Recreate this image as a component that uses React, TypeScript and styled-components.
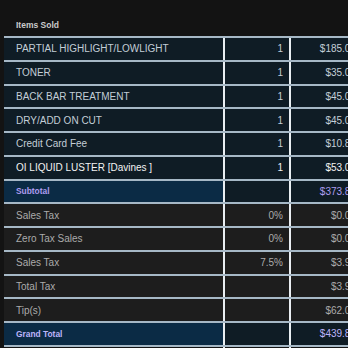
import React from "react";
import styled, { createGlobalStyle } from "styled-components";

const GlobalStyle = createGlobalStyle`
  html, body {
    margin: 0;
    padding: 0;
    background: #131313;
    overflow: hidden;
  }
  body {
    font-family: "Liberation Sans", Arial, sans-serif;
  }
`;

type Tone = "item" | "strong" | "sub" | "tax" | "grand" | "empty";

const Page = styled.div`
  width: 348px;
  height: 348px;
  padding-left: 4px;
  box-sizing: border-box;
  overflow: hidden;
  background: #131313;
`;

const Heading = styled.div`
  height: 36px;
  box-sizing: border-box;
  padding: 20px 0 0 12px;
  font-size: 8.5px;
  font-weight: 700;
  color: #cbcbcb;
`;

const Table = styled.div`
  width: 362px;
  border-top: 2px solid #a6b8c6;
`;

const Row = styled.div<{ $tone: Tone }>`
  display: grid;
  grid-template-columns: 219px 66px 73px;
  height: 21.75px;
  border-bottom: ${(p) => (p.$tone === "empty" ? "none" : "2px solid #a6b8c6")};
  background: ${(p) =>
    p.$tone === "tax"
      ? "#1d1d1d"
      : p.$tone === "empty"
      ? "#131313"
      : "#0f1c25"};
  color: ${(p) =>
    p.$tone === "strong"
      ? "#f2f2f2"
      : p.$tone === "tax"
      ? "#ababab"
      : p.$tone === "sub"
      ? "#ad9cef"
      : p.$tone === "grand"
      ? "#bcb4fa"
      : "#c3ced7"};
`;

const Cell = styled.div<{ $align?: "left" | "right"; $line?: boolean; $hl?: boolean }>`
  display: flex;
  align-items: center;
  justify-content: ${(p) => (p.$align === "right" ? "flex-end" : "flex-start")};
  padding: ${(p) => (p.$align === "right" ? "0 6px 0 0" : "0 0 0 12px")};
  border-left: ${(p) => (p.$line ? "2px solid #e9eef2" : "none")};
  background: ${(p) => (p.$hl ? "#0b2b45" : "transparent")};
  font-size: 10px;
  white-space: nowrap;
  overflow: hidden;
`;

const Label = styled.span<{ $bold?: boolean }>`
  font-size: ${(p) => (p.$bold ? "8.4px" : "10px")};
  font-weight: ${(p) => (p.$bold ? 700 : 400)};
`;

const Amount = styled.span`
  font-size: 10px;
`;

const rows: { tone: Tone; label: string; qty: string; price: string }[] = [
  { tone: "item", label: "PARTIAL HIGHLIGHT/LOWLIGHT", qty: "1", price: "$185.00" },
  { tone: "item", label: "TONER", qty: "1", price: "$35.00" },
  { tone: "item", label: "BACK BAR TREATMENT", qty: "1", price: "$45.00" },
  { tone: "item", label: "DRY/ADD ON CUT", qty: "1", price: "$45.00" },
  { tone: "item", label: "Credit Card Fee", qty: "1", price: "$10.83" },
  { tone: "strong", label: "OI LIQUID LUSTER [Davines ]", qty: "1", price: "$53.00" },
  { tone: "sub", label: "Subtotal", qty: "", price: "$373.83" },
  { tone: "tax", label: "Sales Tax", qty: "0%", price: "$0.00" },
  { tone: "tax", label: "Zero Tax Sales", qty: "0%", price: "$0.00" },
  { tone: "tax", label: "Sales Tax", qty: "7.5%", price: "$3.98" },
  { tone: "tax", label: "Total Tax", qty: "", price: "$3.98" },
  { tone: "tax", label: "Tip(s)", qty: "", price: "$62.00" },
  { tone: "grand", label: "Grand Total", qty: "", price: "$439.81" },
  { tone: "empty", label: "", qty: "", price: "" },
];

export default function App() {
  return (
    <Page>
      <GlobalStyle />
      <Heading>Items Sold</Heading>
      <Table>
        {rows.map((r, i) => {
          const bold = r.tone === "sub" || r.tone === "grand";
          return (
            <Row key={i} $tone={r.tone}>
              <Cell $hl={bold}>
                <Label $bold={bold}>{r.label}</Label>
              </Cell>
              <Cell $align="right" $line>
                {r.qty}
              </Cell>
              <Cell $align="right" $line>
                <Amount>{r.price}</Amount>
              </Cell>
            </Row>
          );
        })}
      </Table>
    </Page>
  );
}
